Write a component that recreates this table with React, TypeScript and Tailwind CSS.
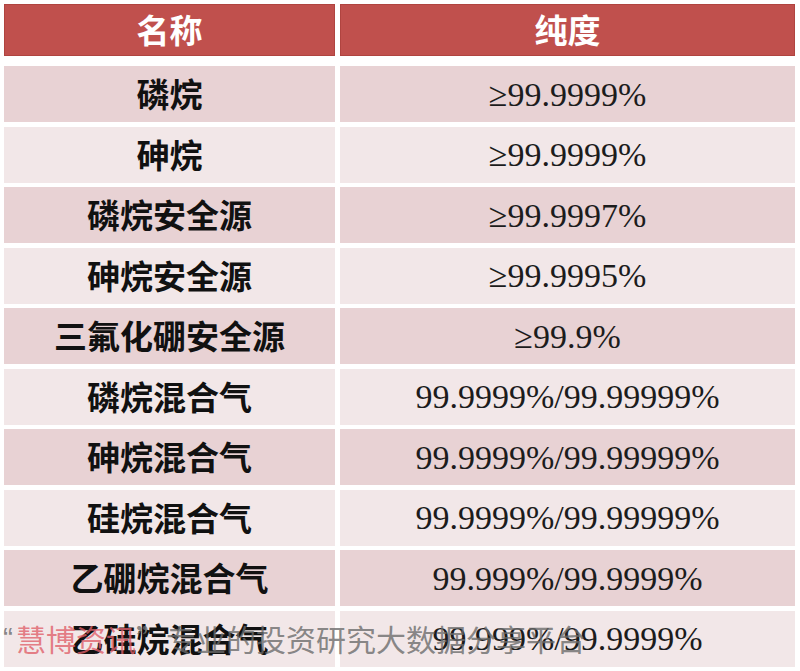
const ROWS: { name: string; purity: string }[] = [
  { name: "磷烷", purity: "≥99.9999%" },
  { name: "砷烷", purity: "≥99.9999%" },
  { name: "磷烷安全源", purity: "≥99.9997%" },
  { name: "砷烷安全源", purity: "≥99.9995%" },
  { name: "三氟化硼安全源", purity: "≥99.9%" },
  { name: "磷烷混合气", purity: "99.9999%/99.99999%" },
  { name: "砷烷混合气", purity: "99.9999%/99.99999%" },
  { name: "硅烷混合气", purity: "99.9999%/99.99999%" },
  { name: "乙硼烷混合气", purity: "99.999%/99.9999%" },
  { name: "乙硅烷混合气", purity: "99.999%/99.9999%" },
];

const cjk = { fontFamily: '"Noto Sans CJK SC", "Noto Sans", sans-serif' };
const serif = { fontFamily: '"Liberation Serif", "Times New Roman", serif' };
const latin = { fontFamily: '"Liberation Sans", Arial, sans-serif' };

export default function App() {
  return (
    <div className="relative w-[800px] h-[671px] bg-white overflow-hidden">
      <div className="flex flex-col pt-[4px] pl-[4px] pr-[5px]">
        <div className="flex gap-[5px] h-[52px] mb-[10px]">
          <div
            className="w-[331px] flex items-center justify-center bg-[#c0504d] border border-[#b04440] text-white text-[33px] font-bold"
            style={cjk}
          >
            名称
          </div>
          <div
            className="flex-1 flex items-center justify-center bg-[#c0504d] border border-[#b04440] text-white text-[33px] font-bold"
            style={cjk}
          >
            纯度
          </div>
        </div>
        <div className="flex flex-col gap-[4.5px]">
          {ROWS.map((row, i) => {
            const bg = i % 2 === 0 ? "bg-[#e8d2d4]" : "bg-[#f2e7e8]";
            return (
              <div key={i} className="flex gap-[5px] h-[56px]">
                <div
                  className={`w-[331px] flex items-center justify-center ${bg} text-[#111] text-[33px] font-bold`}
                  style={cjk}
                >
                  {row.name}
                </div>
                <div
                  className={`flex-1 flex items-center justify-center ${bg} text-[#1c1c1c] text-[34px]`}
                  style={serif}
                >
                  {row.purity}
                </div>
              </div>
            );
          })}
        </div>
      </div>
      <div
        className="absolute left-[3px] top-[618px] flex items-center text-[30px] leading-[40px] whitespace-nowrap text-[#6b6b6b]/80"
        style={cjk}
      >
        <span style={latin} className="mr-[3px]">“</span>
        <span className="text-[#e0606a]/80">慧博资讯</span>
        <span>”专业的投资研究大数据分享平台</span>
      </div>
    </div>
  );
}
